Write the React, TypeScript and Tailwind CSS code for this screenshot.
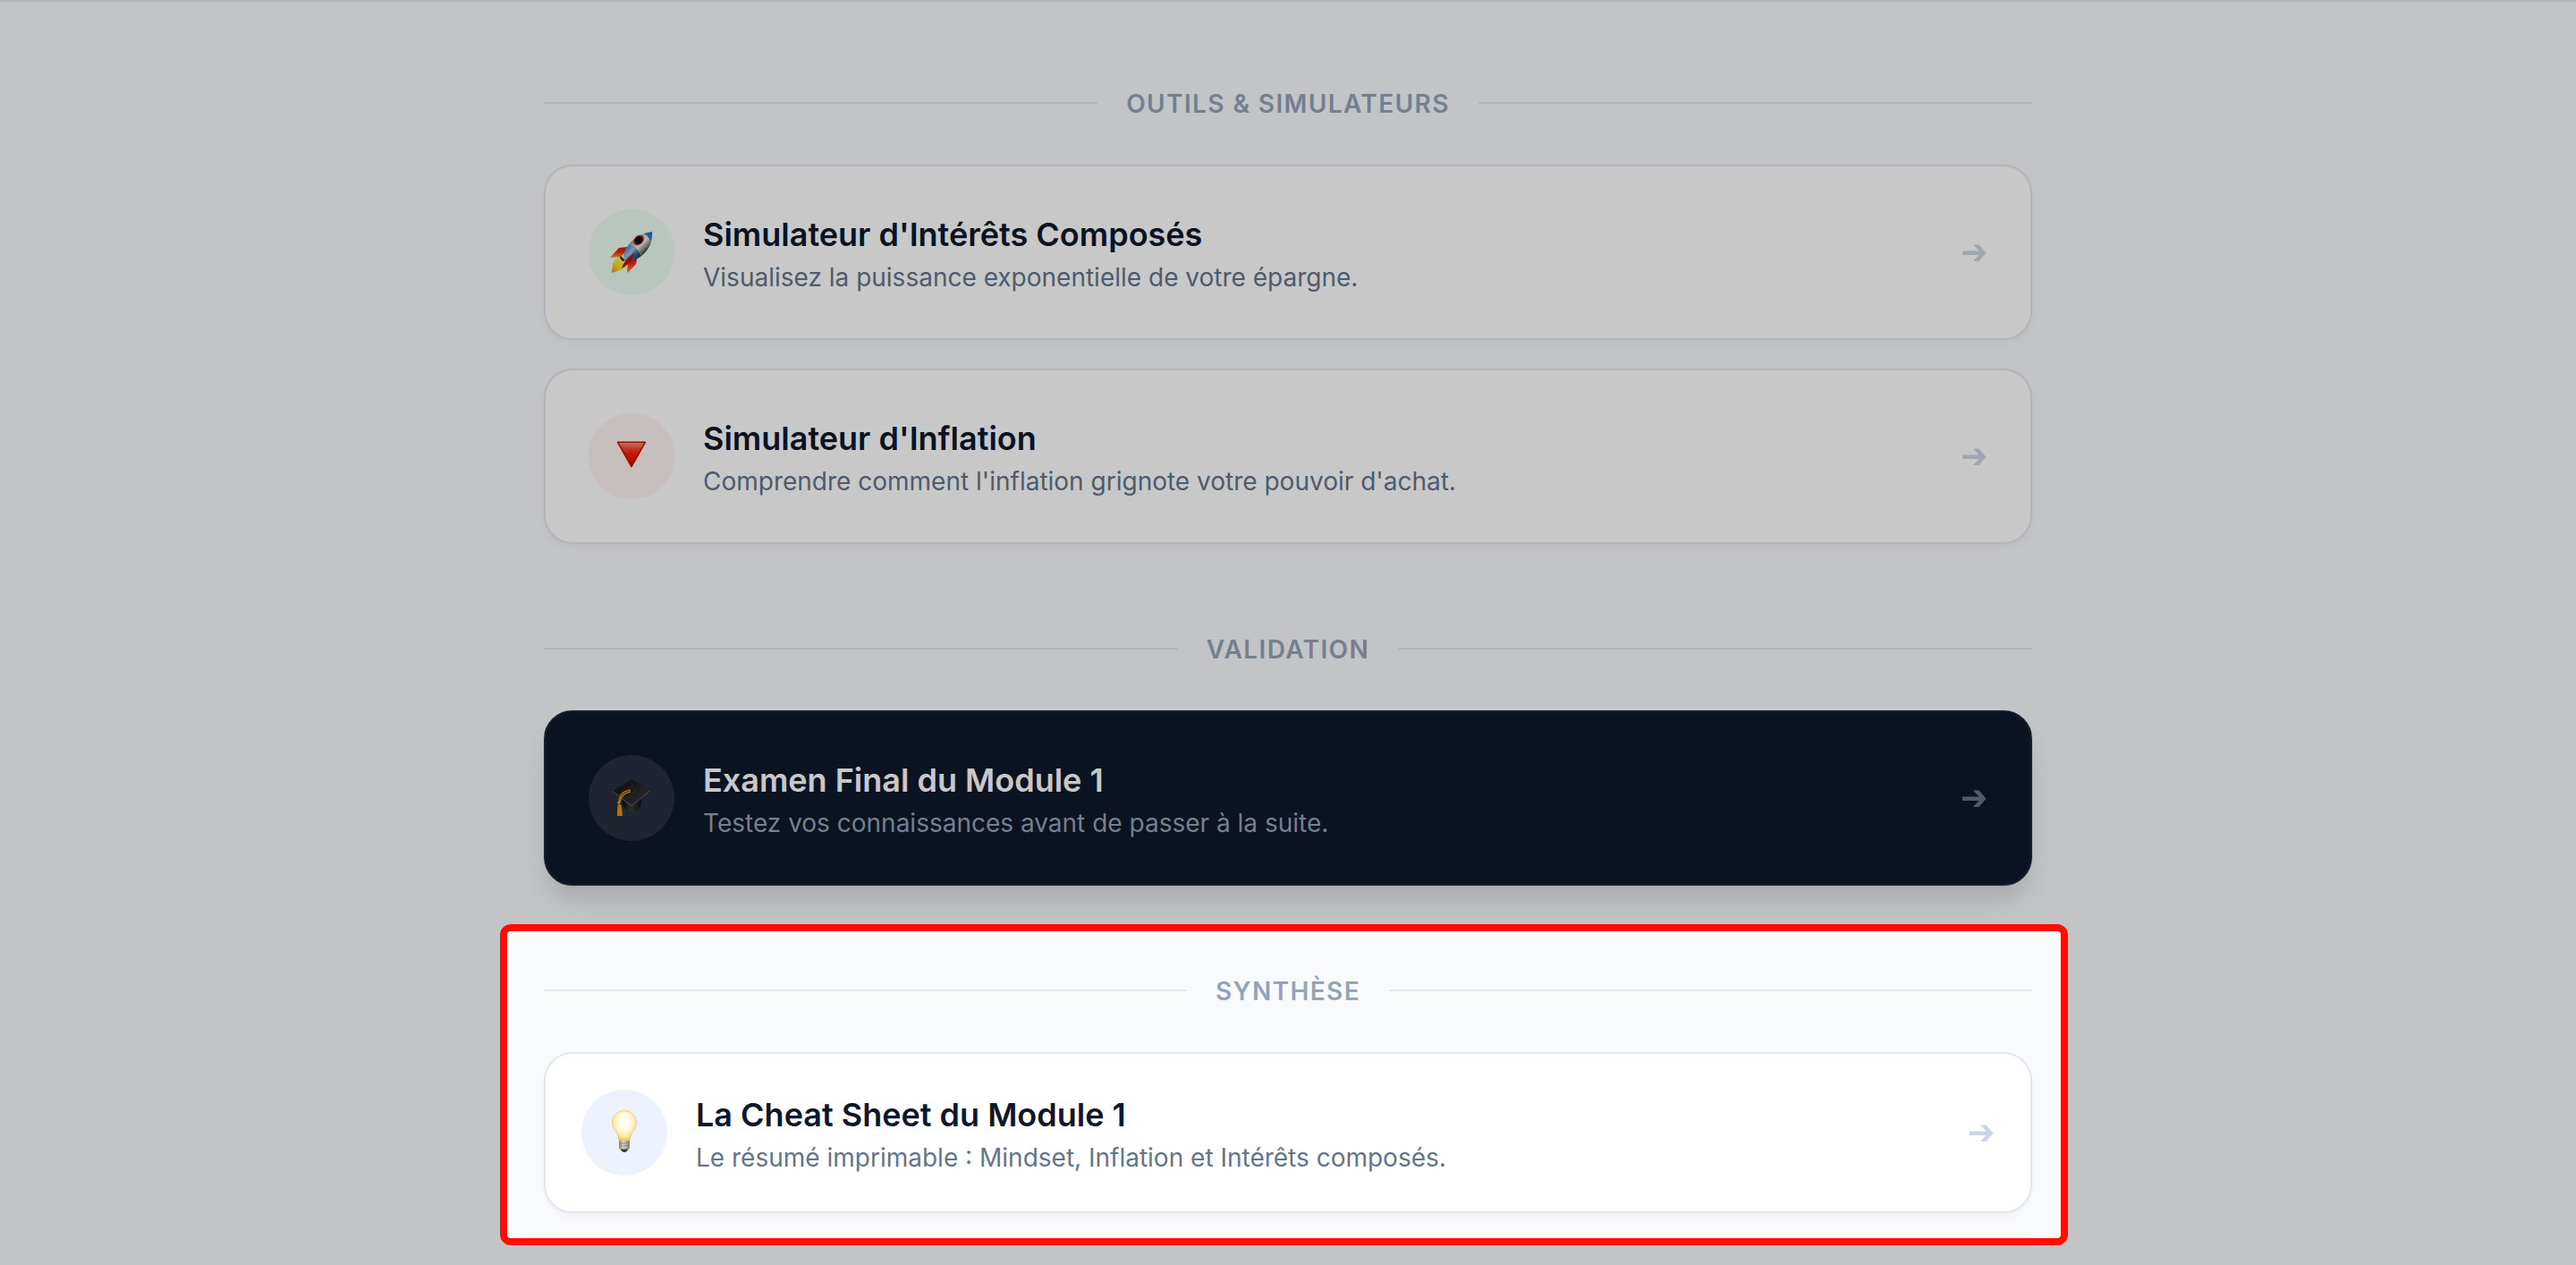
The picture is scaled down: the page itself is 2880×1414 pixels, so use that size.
import React from "react";

type Tool = {
  title: string;
  description: string;
  icon: React.ReactNode;
  iconBg: string;
  variant?: "light" | "dark" | "compact";
};

const RocketIcon = () => (
  <svg viewBox="0 0 48 46" className="w-12 h-[46px]" aria-hidden="true">
    <defs>
      <linearGradient id="rk-body" x1="25" y1="8" x2="40" y2="24" gradientUnits="userSpaceOnUse">
        <stop offset="0" stopColor="#4f86bf" />
        <stop offset=".2" stopColor="#a9b9c8" />
        <stop offset=".5" stopColor="#ececec" />
        <stop offset=".75" stopColor="#8e8e8e" />
        <stop offset="1" stopColor="#2c3036" />
      </linearGradient>
      <linearGradient id="rk-blue" x1="18" y1="17" x2="32" y2="30" gradientUnits="userSpaceOnUse">
        <stop offset="0" stopColor="#3b7cc0" />
        <stop offset=".4" stopColor="#9cc4ea" />
        <stop offset=".7" stopColor="#2f68a5" />
        <stop offset="1" stopColor="#12375f" />
      </linearGradient>
      <linearGradient id="rk-fin" x1="0" y1="0" x2="0" y2="1">
        <stop offset="0" stopColor="#c41208" />
        <stop offset=".5" stopColor="#f22a10" />
        <stop offset="1" stopColor="#ff9a1e" />
      </linearGradient>
      <linearGradient id="rk-fire" x1="1" y1="0" x2="0" y2="1">
        <stop offset="0" stopColor="#fff27a" />
        <stop offset=".6" stopColor="#ffd92e" />
        <stop offset="1" stopColor="#f07a12" />
      </linearGradient>
    </defs>
    <path d="M20 17 10 18 0 29l12-1 5-5z" fill="url(#rk-fin)" />
    <path d="M31 26l-2 10-9 10-1-2 1-9 5-6z" fill="url(#rk-fin)" />
    <path d="M12 28c-5 1-8 4-9 9l-1 9 6-2 6-2c5-3 6-6 6-10z" fill="url(#rk-fire)" />
    <path d="M15 27C18 14 30 2 47 0c2 12-6 25-18 31l-11 2z" fill="url(#rk-body)" />
    <path d="M38 2 47 0c.5 4-.3 8-2 11-1-4-3-7-7-9z" fill="#2f6fb2" />
    <path d="M15 27c1-5 3-9 7-13 5 2 10 7 13 12-3 3-6 5-10 6l-8 1z" fill="url(#rk-blue)" />
    <path d="M22 14c5 2 10 7 13 12" fill="none" stroke="#d9b64c" strokeWidth=".9" />
    <ellipse cx="32" cy="9.500" rx="6.500" ry="5" transform="rotate(-40 32 9.500)" fill="#c8201a" />
    <ellipse cx="32" cy="9.500" rx="4.700" ry="3.800" transform="rotate(-40 32 9.500)" fill="#0d1116" />
    <path d="m12 27 5 5-3 1-3-4z" fill="#1d2733" />
    <path d="M28 23c-4 3-12 8-15 18 6-3 12-8 15-18z" fill="#b81410" />
  </svg>
);

const TriangleIcon = () => (
  <svg viewBox="0 0 34 30" className="w-[34px] h-[30px] -mt-1" aria-hidden="true">
    <defs>
      <linearGradient id="tri-fill" x1="0" y1="0" x2="0" y2="1">
        <stop offset="0" stopColor="#ee9a8c" />
        <stop offset=".25" stopColor="#f0503a" />
        <stop offset=".48" stopColor="#ff1c00" />
        <stop offset=".7" stopColor="#ee1a00" />
        <stop offset="1" stopColor="#8c0d00" />
      </linearGradient>
    </defs>
    <path d="M1.500 1.200h31L17 28.500z" fill="url(#tri-fill)" stroke="#c81000" strokeWidth="1.600" strokeLinejoin="round" />
  </svg>
);

const GraduationIcon = () => (
  <svg viewBox="0 0 42 42" className="w-[42px] h-[42px]" aria-hidden="true">
    <defs>
      <linearGradient id="cap-top" x1="0" y1="0" x2="1" y2="1">
        <stop offset="0" stopColor="#101010" />
        <stop offset="1" stopColor="#3a3a3a" />
      </linearGradient>
      <linearGradient id="cap-base" x1="0" y1="0" x2="1" y2="0">
        <stop offset="0" stopColor="#0b0b0b" />
        <stop offset=".4" stopColor="#3a3a3a" />
        <stop offset="1" stopColor="#141414" />
      </linearGradient>
    </defs>
    <path d="M11 20v9c2 4 6 6 10 8 5-1 9-4 11-8V18z" fill="url(#cap-base)" />
    <path d="M21 0 42 12 21 29 0 13z" fill="url(#cap-top)" />
    <path d="m0 13 21 16 21-17v1.500L21 30.500 0 14.500z" fill="#555" />
    <ellipse cx="21" cy="12" rx="3.500" ry="3" fill="#1c1c1c" stroke="#444" strokeWidth=".6" />
    <path d="M20 12C13 13 7 17 7 26M20 14c-6 1-11 5-12 12" fill="none" stroke="#e0921c" strokeWidth="1.300" />
    <circle cx="7" cy="26" r="1.600" fill="#e8a030" />
    <path d="M6 28h3c1 4 2 8 2 13H5c0-5 0-9 1-13z" fill="#e08f1e" />
  </svg>
);

const BulbIcon = () => (
  <svg viewBox="0 0 28 47" className="w-7 h-[47px] -mt-1" aria-hidden="true">
    <defs>
      <radialGradient id="bulb-glass" cx=".5" cy=".38" r=".6">
        <stop offset="0" stopColor="#ffffff" />
        <stop offset=".4" stopColor="#fffbe6" />
        <stop offset=".8" stopColor="#fbe9a4" />
        <stop offset="1" stopColor="#ecc95e" />
      </radialGradient>
      <linearGradient id="bulb-base" x1="0" y1="0" x2="1" y2="0">
        <stop offset="0" stopColor="#8b8377" />
        <stop offset=".4" stopColor="#ddd8d0" />
        <stop offset="1" stopColor="#857d72" />
      </linearGradient>
    </defs>
    <path d="M14 .5C6 .5.500 6.500.500 14c0 6 4 9 6 13 1 3 1 5 1.500 7h12c.5-2 .5-4 1.500-7 2-4 6-7 6-13C27.500 6.500 22 .5 14 .5z" fill="url(#bulb-glass)" stroke="#e9c560" strokeWidth=".8" />
    <path d="M8 34h12v8c0 1-2 2-3 2h-6c-1 0-3-1-3-2z" fill="url(#bulb-base)" />
    <path d="M8.500 37.500 19.500 36M8.500 40.500 19.500 39" stroke="#847b70" strokeWidth=".8" />
    <path d="M9.500 43.500h9c-1 2-3 3.500-4.500 3.500s-3.500-1.500-4.500-3.500z" fill="#3a3733" />
  </svg>
);

const ArrowIcon = ({ className }: { className: string }) => (
  <svg viewBox="0 0 28 20" className={`w-7 h-5 shrink-0 ${className}`} fill="currentColor" aria-hidden="true">
    <path d="M0 8.600h18.500L12 1.500h6.500l8 9.300-8 9.200H12l6.500-7.100H0z" />
  </svg>
);

const simulators: Tool[] = [
  {
    title: "Simulateur d'Intérêts Composés",
    description: "Visualisez la puissance exponentielle de votre épargne.",
    icon: <RocketIcon />,
    iconBg: "bg-[#ecfdf3]",
  },
  {
    title: "Simulateur d'Inflation",
    description: "Comprendre comment l'inflation grignote votre pouvoir d'achat.",
    icon: <TriangleIcon />,
    iconBg: "bg-[#fef2f2]",
  },
];

const exam: Tool = {
  title: "Examen Final du Module 1",
  description: "Testez vos connaissances avant de passer à la suite.",
  icon: <GraduationIcon />,
  iconBg: "bg-white/10",
  variant: "dark",
};

const cheatSheet: Tool = {
  title: "La Cheat Sheet du Module 1",
  description: "Le résumé imprimable : Mindset, Inflation et Intérêts composés.",
  icon: <BulbIcon />,
  iconBg: "bg-[#eef2ff]",
  variant: "compact",
};

const cardStyles = {
  light: "p-12 bg-white border-slate-200 shadow-[0_4px_6px_rgba(0,0,0,0.04)]",
  dark: "p-12 bg-[#0f172a] border-[#1e293b] shadow-[0_20px_30px_-6px_rgba(0,0,0,0.15)]",
  compact: "p-10 bg-white border-slate-200 shadow-[0_4px_6px_rgba(0,0,0,0.04)]",
};

const ToolCard = ({ title, description, icon, iconBg, variant = "light" }: Tool) => {
  const dark = variant === "dark";
  return (
    <a href="#" className={`flex items-center gap-8 rounded-[32px] border-2 ${cardStyles[variant]}`}>
      <span className={`flex items-center justify-center w-24 h-24 shrink-0 rounded-full ${iconBg}`}>{icon}</span>
      <div className="flex-1">
        <h3 className={`font-semibold text-4xl leading-[56px] ${dark ? "text-white" : "text-[#0f172a]"}`}>{title}</h3>
        <p className={`text-[28px] leading-[40px] ${dark ? "text-[#94a3b8]" : "text-[#64748b]"}`}>{description}</p>
      </div>
      <ArrowIcon className={dark ? "text-[#64748b]" : "text-[#cbd5e1]"} />
    </a>
  );
};

const SectionTitle = ({ children }: { children: React.ReactNode }) => (
  <div className="flex items-center gap-8 mb-12">
    <div className="flex-1 h-[2px] bg-slate-200" />
    <h2 className="pt-0.5 text-[28px] leading-[40px] font-semibold tracking-wider text-[#94a3b8] uppercase">{children}</h2>
    <div className="flex-1 h-[2px] bg-slate-200" />
  </div>
);

const App: React.FC = () => {
  return (
    <div className="min-h-screen overflow-hidden bg-[#f8fafc] font-['Inter',sans-serif]">
      <hr className="border-t-2 border-slate-200" />
      <main className="max-w-[1664px] mx-auto pt-[92px] pb-14 flex flex-col gap-24">
        <section>
          <SectionTitle>Outils & Simulateurs</SectionTitle>
          <div className="flex flex-col gap-8">
            {simulators.map((tool) => (
              <ToolCard key={tool.title} {...tool} />
            ))}
          </div>
        </section>

        <section>
          <SectionTitle>Validation</SectionTitle>
          <ToolCard {...exam} />
        </section>

        <section className="relative">
          <SectionTitle>Synthèse</SectionTitle>
          <ToolCard {...cheatSheet} />
          {/* Spotlight frame, its spread shadow dims the rest of the page */}
          <div className="absolute -top-[53px] -bottom-9 -left-[49px] -right-10 rounded-xl border-8 border-[#ff0d00] pointer-events-none shadow-[0_0_0_4000px_rgba(0,0,0,0.215)]" />
        </section>
      </main>
    </div>
  );
};

export default App;
